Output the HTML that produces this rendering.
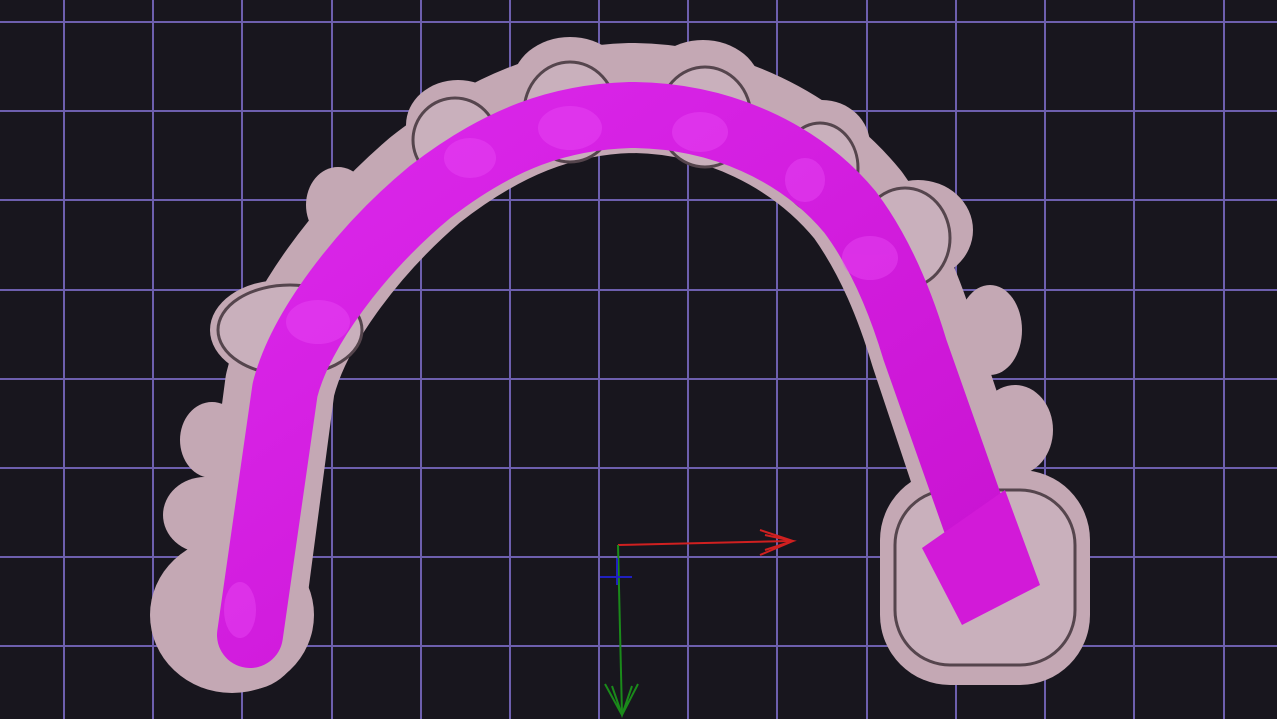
<!DOCTYPE html>
<html><head><meta charset="utf-8"><style>
html,body{margin:0;padding:0;background:#18161e;}
svg{display:block}
</style></head><body>
<svg width="1277" height="719" viewBox="0 0 1277 719" xmlns="http://www.w3.org/2000/svg">
<defs>
<linearGradient id="m" x1="0" y1="0" x2="1" y2="1"><stop offset="0" stop-color="#dc28ec"/><stop offset="1" stop-color="#c812d0"/></linearGradient>
</defs>
<rect width="1277" height="719" fill="#18161e"/>
<g stroke="#6d5fae" stroke-width="2">
<path d="M64 0V719M153 0V719M242 0V719M332 0V719M421 0V719M510 0V719M599 0V719M688 0V719M777 0V719M867 0V719M956 0V719M1045 0V719M1134 0V719M1224 0V719"/>
<path d="M0 22H1277M0 111H1277M0 200H1277M0 290H1277M0 379H1277M0 468H1277M0 557H1277M0 646H1277"/>
</g>
<!-- gray body -->
<g fill="#c4a8b4">
<path d="M247 635 L280 385 C296 320 355 240 425 180 C495 125 560 100 630 98 C720 98 805 140 858 205 C890 250 910 300 925 350 L985 530" fill="none" stroke="#c4a8b4" stroke-width="110" stroke-linecap="round" stroke-linejoin="round"/>
<ellipse cx="232" cy="615" rx="82" ry="78"/>
<ellipse cx="212" cy="440" rx="32" ry="38"/>
<ellipse cx="205" cy="515" rx="42" ry="38"/>
<ellipse cx="282" cy="330" rx="72" ry="50"/>
<ellipse cx="338" cy="205" rx="32" ry="38"/>
<ellipse cx="458" cy="125" rx="52" ry="45"/>
<ellipse cx="570" cy="85" rx="58" ry="48"/>
<ellipse cx="703" cy="88" rx="58" ry="48"/>
<ellipse cx="822" cy="145" rx="48" ry="45"/>
<ellipse cx="918" cy="230" rx="55" ry="50"/>
<ellipse cx="990" cy="330" rx="32" ry="45"/>
<ellipse cx="1015" cy="430" rx="38" ry="45"/>
<rect x="880" y="470" width="210" height="215" rx="70"/>
</g>
<!-- sockets -->
<g fill="#c9b0bc" stroke="#55454d" stroke-width="3">
<ellipse cx="455" cy="140" rx="42" ry="42"/>
<ellipse cx="570" cy="112" rx="46" ry="50"/>
<ellipse cx="705" cy="117" rx="46" ry="50"/>
<ellipse cx="820" cy="168" rx="38" ry="45"/>
<ellipse cx="905" cy="238" rx="45" ry="50"/>
<ellipse cx="290" cy="330" rx="72" ry="45"/>
<rect x="895" y="490" width="180" height="175" rx="55"/>
</g>
<!-- magenta band -->
<path d="M250 635 L285 390 C300 330 360 250 430 192 C500 138 560 117 630 115 C720 115 800 152 850 212 C880 252 900 300 915 350 L975 520" fill="none" stroke="url(#m)" stroke-width="66" stroke-linecap="round" stroke-linejoin="round"/>
<polygon points="922,548 1005,490 1040,585 962,625" fill="#d21ad8"/>
<g fill="#e84af5" opacity="0.45">
<ellipse cx="570" cy="128" rx="32" ry="22"/>
<ellipse cx="700" cy="132" rx="28" ry="20"/>
<ellipse cx="470" cy="158" rx="26" ry="20"/>
<ellipse cx="805" cy="180" rx="20" ry="22"/>
<ellipse cx="870" cy="258" rx="28" ry="22"/>
<ellipse cx="318" cy="322" rx="32" ry="22"/>
<ellipse cx="240" cy="610" rx="16" ry="28"/>
</g>
<!-- axes -->
<g fill="none" stroke-width="2">
<path d="M618 545 L790 541" stroke="#d02020"/>
<path d="M760 530 L793 541 L760 555 M765 535 L793 541 L765 550" stroke="#d02020"/>
<path d="M618 545 L622 715" stroke="#1a8a1a"/>
<path d="M605 684 L622 715 L638 684 M612 686 L622 715 L632 686" stroke="#1a8a1a"/>
<path d="M617 558 L617 585 M600 577 L632 577" stroke="#2020c0"/>
</g>
</svg>
</body></html>
